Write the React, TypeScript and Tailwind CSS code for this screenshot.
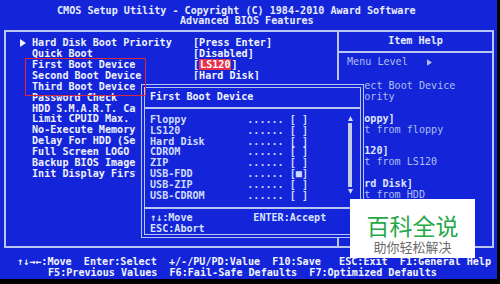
import React from 'react';

const items = [
  { label: 'Hard Disk Boot Priority', value: '[Press Enter]', arrow: true },
  { label: 'Quick Boot', value: '[Disabled]' },
  { label: 'First Boot Device', value: 'LS120', hot: true },
  { label: 'Second Boot Device', value: '[Hard Disk]' },
  { label: 'Third Boot Device', value: '[CDROM]' },
  { label: 'Password Check', value: '' },
  { label: 'HDD S.M.A.R.T. Capability', value: '' },
  { label: 'Limit CPUID Max.', value: '' },
  { label: 'No-Execute Memory', value: '' },
  { label: 'Delay For HDD (Secs)', value: '' },
  { label: 'Full Screen LOGO', value: '' },
  { label: 'Backup BIOS Image', value: '' },
  { label: 'Init Display First', value: '' },
];

const devices = ['Floppy', 'LS120', 'Hard Disk', 'CDROM', 'ZIP', 'USB-FDD', 'USB-ZIP', 'USB-CDROM'];

const help = [
  'Select Boot Device',
  'Priority',
  '',
  '[Floppy]',
  'Boot from floppy',
  '',
  '[LS120]',
  'Boot from LS120',
  '',
  '[Hard Disk]',
  'Boot from HDD',
];

const Tri = ({ dir = 'right', className = '' }: { dir?: 'right' | 'up' | 'down'; className?: string }) => {
  const pts = dir === 'right' ? '0,0 6,4 0,8' : dir === 'up' ? '0,6 3,0 6,6' : '0,0 6,0 3,6';
  return (
    <svg width={6} height={dir === 'right' ? 8 : 6} viewBox={dir === 'right' ? '0 0 6 8' : '0 0 6 6'} className={className}>
      <polygon points={pts} fill="currentColor" />
    </svg>
  );
};

export default function App() {
  return (
    <div className="w-[500px] h-[284px] bg-black overflow-hidden relative font-['DejaVu_Sans_Mono',monospace] font-bold text-[10.1px] leading-[10.95px] text-[#eef2ff]">
      <div className="w-[497px] h-[279px] bg-[#1424d8] flex flex-col">
        {/* title */}
        <div className="pt-[5.5px] h-[30px] text-[#e6ecff]">
          <div className="pl-[57px] leading-[10.5px] whitespace-pre">CMOS Setup Utility - Copyright (C) 1984-2010 Award Software</div>
          <div className="pl-[180px] leading-[10.5px] whitespace-pre">Advanced BIOS Features</div>
        </div>

        {/* main box */}
        <div className="ml-[4px] w-[490px] h-[219px] border-2 border-[#b8c6f4] flex">
          <div className="w-[331px] pt-[6px]">
            {items.map((it) => (
              <div key={it.label} className="flex h-[10.95px] whitespace-pre">
                <div className="w-[26px] pl-[14px] flex items-center">
                  {it.arrow && <Tri className="text-[#eef2ff]" />}
                </div>
                <div className="w-[161px] overflow-hidden">{it.label}</div>
                <div className="text-[#f0f4ff]">
                  {it.hot ? (
                    <span>
                      [<span className="bg-[#e8304a] text-white px-[1px]">{it.value}</span>]
                    </span>
                  ) : (
                    it.value
                  )}
                </div>
              </div>
            ))}
          </div>
          <div className="flex-1 border-l-2 border-[#b8c6f4] flex flex-col">
            <div className="h-[21px] border-b-2 border-[#b8c6f4] flex items-center justify-center text-[#e6ecff]">
              Item Help
            </div>
            <div className="pt-[4.5px] pl-[7px] text-[#aebff2] font-normal">
              <div className="flex items-center h-[10.95px] pl-[1px]">
                <span>Menu Level</span>
                <Tri className="ml-[19px] w-[5px] h-[7px]" />
              </div>
              <div className="h-[12.5px]" />
              {help.map((h, i) => (
                <div key={i} className={`h-[10.95px] whitespace-pre ${h.startsWith('[') ? 'font-bold text-[#dfe6ff]' : ''}`}>
                  {h}
                </div>
              ))}
            </div>
          </div>
        </div>

        {/* footer keys */}
        <div className="mt-[9px] whitespace-pre text-[#f0f4ff]">
          <div className="pl-[17px] h-[10.95px]">↑↓→←:Move  Enter:Select  +/-/PU/PD:Value  F10:Save   ESC:Exit  F1:General Help</div>
          <div className="pl-[48px] h-[10.95px]">F5:Previous Values  F6:Fail-Safe Defaults  F7:Optimized Defaults</div>
        </div>
      </div>

      {/* popup, with the blank cells the BIOS clears round it */}
      <div className="absolute left-[136px] top-[80px] pl-[5px] pt-[4px] bg-[#1424d8]">
        <div className="w-[223px] h-[154px] bg-[#1424d8] border-[4px] border-double border-[#b8c6f4] flex flex-col">
          <div className="h-[21px] border-b-2 border-[#b8c6f4] pl-[5px] pt-[3.5px] text-[#eef2ff]">First Boot Device</div>
          <div className="h-[100px] border-b-2 border-[#b8c6f4] flex pl-[5px] pt-[6px]">
            <div className="w-[190px] text-[#cfdcff]">
              {devices.map((d, i) => (
                <div key={d} className="h-[10.8px] whitespace-pre">
                  {d.padEnd(16, ' ')}...... [{i === 5 ? '■' : ' '}]
                </div>
              ))}
            </div>
            <div className="ml-[7px] w-[6px] flex flex-col items-center text-[#cfdcff]">
              <Tri dir="up" className="mt-[1px] w-[5px] h-[5px]" />
              <div className="w-[4px] h-[64px] mt-[2px] bg-[#c4cce6]" />
              <Tri dir="down" className="mt-[2px] w-[5px] h-[5px]" />
            </div>
          </div>
          <div className="pl-[5px] pt-[4.5px] text-[#d8e2ff] whitespace-pre">
            <div className="h-[10.5px]">↑↓:Move          ENTER:Accept</div>
            <div className="h-[10.5px]">ESC:Abort</div>
          </div>
        </div>
      </div>

      {/* red annotation */}
      <div className="absolute left-[25px] top-[58px] w-[121px] h-[38px] border-[1.5px] border-[#d8283a]" />

      {/* watermark */}
      <div className="absolute left-[350px] top-[199px] w-[125px] h-[59px] bg-white flex flex-col items-center font-['Noto_Sans_CJK_SC',sans-serif] font-normal">
        <div className="mt-[13px] text-[23px] leading-[26px] text-[#25a845]">百科全说</div>
        <div className="mt-[1px] text-[13px] leading-[15px] text-[#6b6b6b]">助你轻松解决</div>
      </div>
    </div>
  );
}
